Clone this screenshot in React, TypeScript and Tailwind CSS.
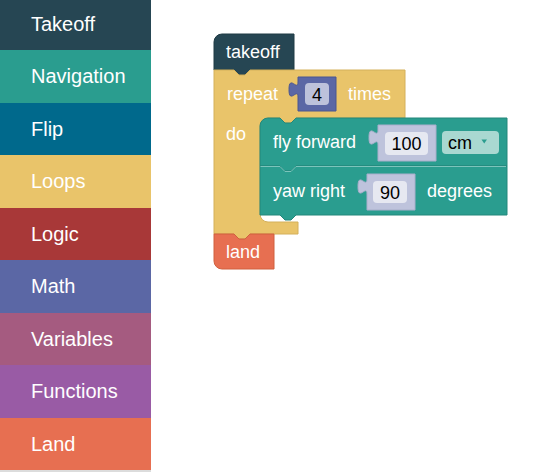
import React from 'react';

const categories = [
  { label: 'Takeoff', color: 'bg-[#264653]' },
  { label: 'Navigation', color: 'bg-[#2a9d8f]' },
  { label: 'Flip', color: 'bg-[#00698c]' },
  { label: 'Loops', color: 'bg-[#e9c46a]' },
  { label: 'Logic', color: 'bg-[#a83838]' },
  { label: 'Math', color: 'bg-[#5b67a5]' },
  { label: 'Variables', color: 'bg-[#a55b80]' },
  { label: 'Functions', color: 'bg-[#995ba5]' },
  { label: 'Land', color: 'bg-[#e76f51]' },
];

const FONT = '"Liberation Sans", Arial, sans-serif';

// puzzle knob on the left of a value block, top edge at y
const knob = (x: number, y: number, h: number, r: number) =>
  `M${x},${y} H${r} V${y + h} H${x} V${y + 20} c0,-10 -9,8 -9,-7.5 s9,2.5 9,-7.5 Z`;

const Label: React.FC<{ x: number; y: number; children: React.ReactNode; fill?: string; anchor?: 'start' | 'middle' }> = ({ x, y, children, fill = '#fff', anchor = 'start' }) => (
  <text x={x} y={y} fill={fill} fontSize={18} fontFamily={FONT} textAnchor={anchor}>
    {children}
  </text>
);

const Workspace: React.FC = () => (
  <svg viewBox="151 0 391 472" width={391} height={472} className="block">
    {/* takeoff */}
    <path d="M214,70 V42 A8,8 0 0 1 222,34 H294 V70 H250 L245,75 H239 L234,70 Z" fill="#264653" stroke="#1f3a44" strokeWidth={1} />
    <Label x={226} y={58}>takeoff</Label>

    {/* repeat */}
    <path
      d="M214,70 H234 L239,75 H245 L250,70 H405 V118 H296 L291,123 H285 L280,118 H268 A8,8 0 0 0 260,126 V214 A8,8 0 0 0 268,222 H298 V234 H250 L245,239 H239 L234,234 H214 Z"
      fill="#e9c46a"
      stroke="#d4b05a"
      strokeWidth={1}
    />
    <Label x={227} y={100}>repeat</Label>
    <Label x={348} y={100}>times</Label>
    <Label x={226} y={140}>do</Label>

    {/* fly forward */}
    <path d="M260,166 V126 A8,8 0 0 1 268,118 H280 L285,123 H291 L296,118 H507 V166 H296 L291,171 H285 L280,166 Z" fill="#2a9d8f" stroke="#23877b" strokeWidth={1} />
    <Label x={273} y={148}>fly forward</Label>

    {/* yaw right */}
    <path d="M260,166 H280 L285,171 H291 L296,166 H507 V215 H296 L291,220 H285 L280,215 H260 Z" fill="#2a9d8f" stroke="#23877b" strokeWidth={1} />
    <path d="M260.5,166.5 H280 L285,171.5 H291 L296,166.5 H506" fill="none" stroke="#7cc4bb" strokeWidth={1} />
    <Label x={273} y={197}>yaw right</Label>
    <Label x={427} y={197}>degrees</Label>

    {/* land */}
    <path d="M214,234 H234 L239,239 H245 L250,234 H274 V269 H222 A8,8 0 0 1 214,261 Z" fill="#e76f51" stroke="#d0603f" strokeWidth={1} />
    <Label x={226} y={258}>land</Label>

    {/* 4 */}
    <path d={knob(298, 77, 34, 336)} fill="#5b67a5" stroke="#4b5690" strokeWidth={1} />
    <rect x={305} y={83} width={24} height={22} rx={4} fill="#bdc2db" />
    <Label x={317} y={100.5} fill="#000" anchor="middle">4</Label>

    {/* 100 */}
    <path d={knob(378, 125, 36, 436)} fill="#bec3dc" stroke="#a9aecb" strokeWidth={1} />
    <rect x={385} y={132} width={43} height={23} rx={4} fill="#e6e8f1" />
    <Label x={406.5} y={149.5} fill="#000" anchor="middle">100</Label>

    {/* cm dropdown */}
    <rect x={442} y={131} width={57} height={23} rx={4} fill="#a9d8d1" />
    <Label x={448} y={149} fill="#000">cm</Label>
    <path d="M481.5,139.5 H487 L484.2,143.5 Z" fill="#2a9d8f" />

    {/* 90 */}
    <path d={knob(367, 174, 36, 415)} fill="#bec3dc" stroke="#a9aecb" strokeWidth={1} />
    <rect x={373} y={181} width={34} height={22} rx={4} fill="#e6e8f1" />
    <Label x={390} y={198.5} fill="#000" anchor="middle">90</Label>
  </svg>
);

export default function App() {
  return (
    <div className="flex h-[472px] w-[542px] overflow-hidden bg-white font-['Liberation_Sans',Arial,sans-serif]">
      <div className="flex w-[151px] shrink-0 flex-col -mt-[2.5px]">
        {categories.map(c => (
          <div key={c.label} className={`flex h-[52.5px] shrink-0 items-center pl-[31px] text-[20px] text-white ${c.color}`}>
            {c.label}
          </div>
        ))}
        <div className="h-[10px] shrink-0 bg-[#dcdcdc]" />
      </div>
      <div className="relative flex-1">
        <Workspace />
      </div>
    </div>
  );
}
